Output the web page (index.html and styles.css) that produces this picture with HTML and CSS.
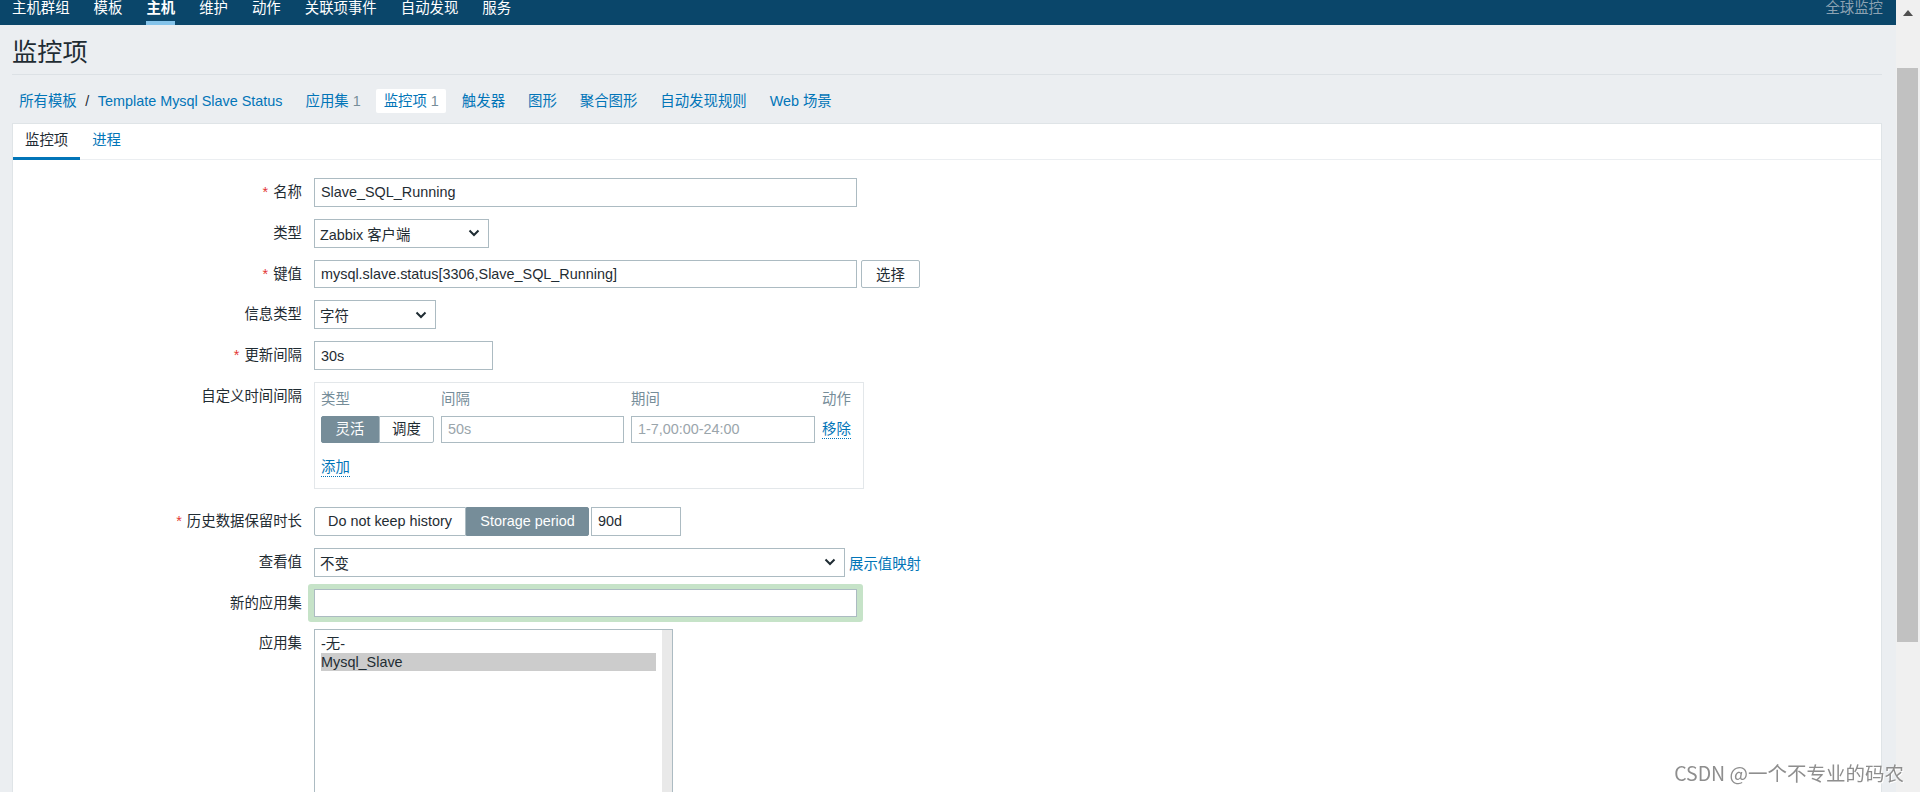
FILE: index.html
```html
<!DOCTYPE html>
<html lang="zh-CN">
<head>
<meta charset="utf-8">
<title>监控项</title>
<link rel="stylesheet" href="styles.css">
</head>
<body>
<div class="app">
  <div class="page">
    <nav class="topnav">
      <ul>
        <li><a href="#">主机群组</a></li>
        <li><a href="#">模板</a></li>
        <li class="sel"><a href="#">主机</a></li>
        <li><a href="#">维护</a></li>
        <li><a href="#">动作</a></li>
        <li><a href="#">关联项事件</a></li>
        <li><a href="#">自动发现</a></li>
        <li><a href="#">服务</a></li>
      </ul>
      <div class="global">全球监控</div>
    </nav>
    <div class="wrapper">
      <header class="title-bar"><h1>监控项</h1></header>
      <ul class="crumbs">
        <li class="bc"><a href="#">所有模板</a><span class="sep">/</span><a href="#">Template Mysql Slave Status</a></li>
        <li><a href="#">应用集</a> <span class="cnt">1</span></li>
        <li class="cur"><a href="#">监控项</a> <span class="cnt">1</span></li>
        <li><a href="#">触发器</a></li>
        <li><a href="#">图形</a></li>
        <li><a href="#">聚合图形</a></li>
        <li><a href="#">自动发现规则</a></li>
        <li><a href="#">Web 场景</a></li>
      </ul>
      <section class="panel">
        <ul class="tabs">
          <li class="sel"><span>监控项</span></li>
          <li><a href="#">进程</a></li>
        </ul>
        <div class="form">
          <div class="lbl"><span class="req">*</span>名称</div>
          <div class="ctl"><input class="input w-wide" type="text" value="Slave_SQL_Running"></div>

          <div class="lbl">类型</div>
          <div class="ctl"><div class="select w-type"><span>Zabbix 客户端</span><svg viewBox="0 0 12 8"><polyline points="1.5,1.5 6,6 10.5,1.5"/></svg></div></div>

          <div class="lbl"><span class="req">*</span>键值</div>
          <div class="ctl"><input class="input w-wide" type="text" value="mysql.slave.status[3306,Slave_SQL_Running]"><button class="btn" type="button">选择</button></div>

          <div class="lbl">信息类型</div>
          <div class="ctl"><div class="select w-info"><span>字符</span><svg viewBox="0 0 12 8"><polyline points="1.5,1.5 6,6 10.5,1.5"/></svg></div></div>

          <div class="lbl"><span class="req">*</span>更新间隔</div>
          <div class="ctl"><input class="input w-delay" type="text" value="30s"></div>

          <div class="lbl">自定义时间间隔</div>
          <div class="ctl">
            <div class="intervals">
              <div class="iv-grid">
                <div class="iv-h">类型</div>
                <div class="iv-h">间隔</div>
                <div class="iv-h">期间</div>
                <div class="iv-h">动作</div>
                <div class="radios sm">
                  <span class="radio on w-flex">灵活</span><span class="radio w-sched">调度</span>
                </div>
                <input class="input sm" type="text" placeholder="50s">
                <input class="input sm" type="text" placeholder="1-7,00:00-24:00">
                <div class="iv-act"><a class="dot" href="#">移除</a></div>
              </div>
              <a class="dot add" href="#">添加</a>
            </div>
          </div>

          <div class="lbl"><span class="req">*</span>历史数据保留时长</div>
          <div class="ctl gap2">
            <div class="radios">
              <span class="radio w-nokeep">Do not keep history</span><span class="radio on w-store">Storage period</span>
            </div>
            <input class="input w-hist" type="text" value="90d">
          </div>

          <div class="lbl">查看值</div>
          <div class="ctl"><div class="select w-map"><span>不变</span><svg viewBox="0 0 12 8"><polyline points="1.5,1.5 6,6 10.5,1.5"/></svg></div><a class="link" href="#">展示值映射</a></div>

          <div class="lbl">新的应用集</div>
          <div class="ctl"><div class="highlight"><input class="input w-wide" type="text" value=""></div></div>

          <div class="lbl">应用集</div>
          <div class="ctl">
            <div class="listbox">
              <div class="opts">
                <div class="opt">-无-</div>
                <div class="opt selected">Mysql_Slave</div>
              </div>
              <div class="lb-track"></div>
            </div>
          </div>
        </div>
      </section>
    </div>
  </div>
  <div class="vscroll">
    <div class="up"><span class="tri"></span></div>
    <div class="thumb"></div>
  </div>
</div>
<div class="watermark">CSDN @一个不专业的码农</div>
</body>
</html>
```

FILE: styles.css
```css
* { box-sizing: border-box; }
html, body { margin: 0; height: 100%; }
body {
  font-family: "Liberation Sans", Arial, "Noto Sans CJK SC", sans-serif;
  font-size: 14.4px;
  color: #1f2c33;
  background: #ebeef1;
  overflow: hidden;
}
a { color: #0275b8; text-decoration: none; }

.app { display: flex; height: 792px; overflow: hidden; }
.page { flex: 1; min-width: 0; display: flex; flex-direction: column; }

/* top navigation */
.topnav {
  flex: none;
  height: 25px;
  background: #0a466a;
  display: flex;
  justify-content: space-between;
}
.topnav ul { list-style: none; margin: 0; padding: 0; display: flex; }
.topnav li { padding: 0 12px; }
.topnav a {
  display: block;
  height: 25px;
  line-height: 16px;
  color: #ffffff;
}
.topnav li.sel a { font-weight: bold; border-bottom: 4px solid #84c3ea; }
.topnav .global { color: #8ca2b2; line-height: 16px; padding-right: 13px; }

.wrapper {
  flex: 1;
  min-height: 0;
  padding: 0 14px 0 12px;
  display: flex;
  flex-direction: column;
}

/* title */
.title-bar { padding: 12px 0 7px; border-bottom: 1px solid #dce1e5; }
.title-bar h1 { margin: 0; font-size: 25.2px; line-height: 30px; font-weight: normal; color: #1f2c33; }

/* breadcrumbs / object nav */
.crumbs {
  list-style: none;
  margin: 0;
  padding: 14px 0 10px;
  display: flex;
  align-items: center;
  gap: 8.6px;
}
.crumbs li { padding: 0 7.2px; height: 24px; line-height: 24px; border-radius: 2px; white-space: nowrap; }
.crumbs li.cur { background: #ffffff; }
.crumbs .sep { color: #1f2c33; margin: 0 8.5px; }
.crumbs .cnt { color: #768d99; }

/* panel */
.panel {
  flex: 1;
  background: #ffffff;
  border: 1px solid #dfe4e7;
  border-bottom: none;
}
.tabs {
  list-style: none;
  margin: 0;
  padding: 0;
  display: flex;
  height: 36px;
  box-shadow: inset 0 -1px 0 #ebeef1;
}
.tabs li {
  padding: 0 12px;
  height: 36px;
  line-height: 33px;
  border-bottom: 3px solid transparent;
}
.tabs li.sel { border-bottom-color: #0275b8; color: #1f2c33; }

/* form */
.form {
  display: grid;
  grid-template-columns: 289px 1fr;
  column-gap: 12px;
  row-gap: 12px;
  padding-top: 18px;
  align-items: start;
}
.lbl { text-align: right; line-height: 28.8px; white-space: nowrap; }
.req { color: #e33734; margin-right: 5px; }
.ctl { display: flex; align-items: center; gap: 4px; min-height: 28.8px; }
.ctl.gap2 { gap: 2px; }

.input {
  height: 28.8px;
  border: 1px solid #acbbc2;
  border-radius: 0;
  padding: 0 6px;
  font: inherit;
  color: #1f2c33;
  background: #ffffff;
  outline: none;
  margin: 0;
}
.input::placeholder { color: #9aa5ab; }
.input.sm { height: 27px; width: 100%; }
.w-wide { width: 543px; }
.w-delay { width: 179px; }
.w-hist { width: 90px; }

.select {
  height: 28.8px;
  border: 1px solid #acbbc2;
  background: #ffffff;
  padding: 0 8px 0 5px;
  display: flex;
  align-items: center;
  justify-content: space-between;
}
.select svg { width: 12px; height: 8px; flex: none; }
.select polyline { fill: none; stroke: #1f2c33; stroke-width: 2; }
.w-type { width: 175px; }
.w-info { width: 122px; }
.w-map { width: 531px; }

.btn {
  height: 28.8px;
  padding: 0 14px;
  border: 1px solid #acbbc2;
  border-radius: 2px;
  background: #ffffff;
  font: inherit;
  color: #1f2c33;
  margin: 0;
}

.link { color: #0275b8; white-space: nowrap; }

/* custom intervals */
.intervals {
  width: 550px;
  border: 1px solid #e3e7ea;
  padding: 6px 6px 11px;
  margin-bottom: 6px;
}
.iv-grid {
  display: grid;
  grid-template-columns: 113px 183px 184px auto;
  column-gap: 7px;
  row-gap: 7px;
  align-items: center;
}
.iv-h { color: #768d99; line-height: 20px; }
.iv-act { display: flex; align-items: center; }
.dot {
  display: inline-block;
  line-height: 18px;
  border-bottom: 1px dotted #0275b8;
}
.add { margin-top: 15px; }

/* radio buttons */
.radios { display: flex; }
.radio {
  height: 28.8px;
  line-height: 26.8px;
  border: 1px solid #acbbc2;
  background: #ffffff;
  color: #1f2c33;
  text-align: center;
  white-space: nowrap;
}
.radios.sm .radio { height: 27px; line-height: 25px; }
.radio:first-child { border-radius: 2px 0 0 2px; }
.radio:last-child { border-radius: 0 2px 2px 0; }
.radio.on { background: #768d99; border-color: #768d99; color: #ffffff; }
.w-flex { width: 58px; }
.w-sched { width: 55px; }
.w-nokeep { width: 152px; }
.w-store { width: 123px; }

/* new application highlight */
.highlight {
  background: #c6e3c8;
  padding: 5px 6px;
  margin: -5px 0 -5px -6px;
  border-radius: 3px;
}

/* listbox */
.listbox {
  width: 359px;
  height: 200px;
  border: 1px solid #acbbc2;
  display: flex;
  background: #ffffff;
}
.opts { flex: 1; padding: 5px 6px; }
.opt { line-height: 18px; white-space: nowrap; }
.opt.selected { background: #cccccc; }
.lb-track { width: 10px; background: #e9e9e9; }

/* window scrollbar */
.vscroll {
  flex: none;
  width: 24px;
  background: #f0f0f0;
  display: flex;
  flex-direction: column;
}
.vscroll .up { height: 25px; display: flex; justify-content: center; padding-top: 10px; }
.vscroll .tri {
  width: 0;
  height: 0;
  border-left: 5.5px solid transparent;
  border-right: 5.5px solid transparent;
  border-bottom: 6px solid #505050;
}
.vscroll .thumb {
  margin: 43px 0 0 1px;
  width: 21px;
  height: 574px;
  background: #c1c1c1;
}

/* watermark */
.watermark {
  position: fixed;
  right: 16px;
  top: 761px;
  font-family: "Noto Sans CJK SC", sans-serif;
  font-size: 19.5px;
  line-height: 24px;
  color: #8e8e8e;
  text-shadow: 1px 1px 0 #ffffff;
  white-space: nowrap;
}
```
